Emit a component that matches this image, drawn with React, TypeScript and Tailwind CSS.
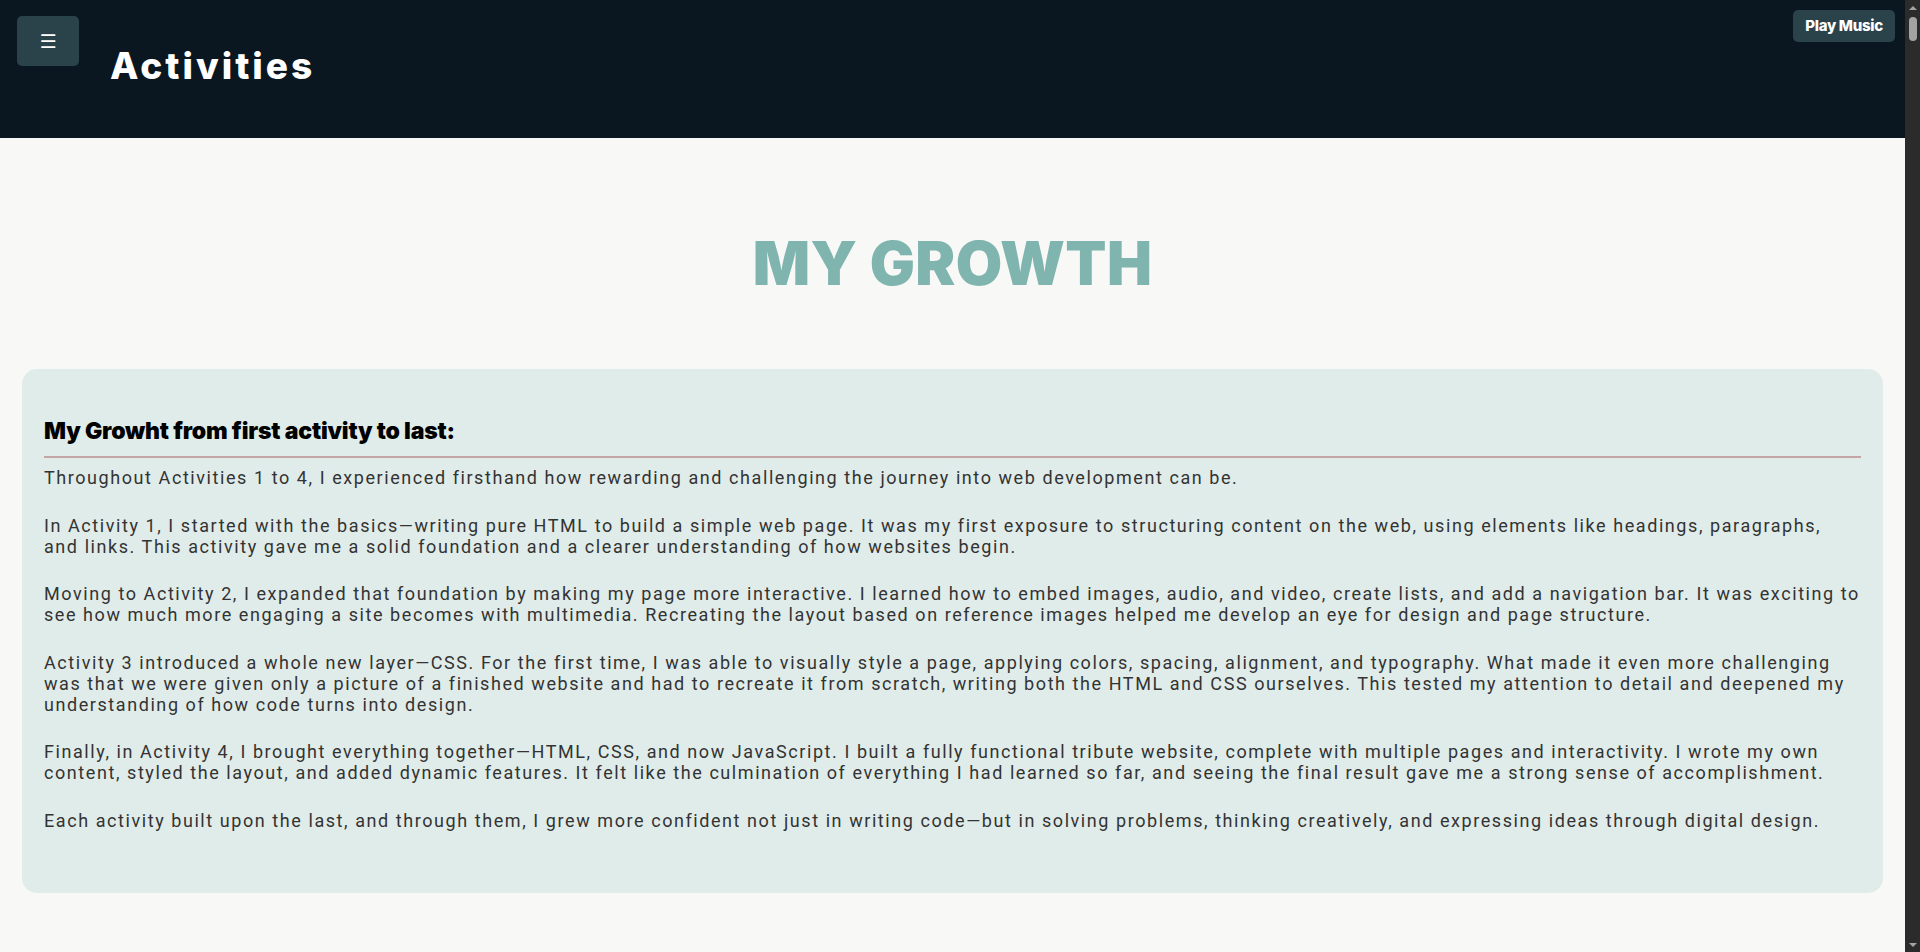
const paragraphs = [
  "Throughout Activities 1 to 4, I experienced firsthand how rewarding and challenging the journey into web development can be.",
  "In Activity 1, I started with the basics—writing pure HTML to build a simple web page. It was my first exposure to structuring content on the web, using elements like headings, paragraphs, and links. This activity gave me a solid foundation and a clearer understanding of how websites begin.",
  "Moving to Activity 2, I expanded that foundation by making my page more interactive. I learned how to embed images, audio, and video, create lists, and add a navigation bar. It was exciting to see how much more engaging a site becomes with multimedia. Recreating the layout based on reference images helped me develop an eye for design and page structure.",
  "Activity 3 introduced a whole new layer—CSS. For the first time, I was able to visually style a page, applying colors, spacing, alignment, and typography. What made it even more challenging was that we were given only a picture of a finished website and had to recreate it from scratch, writing both the HTML and CSS ourselves. This tested my attention to detail and deepened my understanding of how code turns into design.",
  "Finally, in Activity 4, I brought everything together—HTML, CSS, and now JavaScript. I built a fully functional tribute website, complete with multiple pages and interactivity. I wrote my own content, styled the layout, and added dynamic features. It felt like the culmination of everything I had learned so far, and seeing the final result gave me a strong sense of accomplishment.",
  "Each activity built upon the last, and through them, I grew more confident not just in writing code—but in solving problems, thinking creatively, and expressing ideas through digital design.",
];

// dark page scrollbar as seen in the screenshot
const Scrollbar = () => (
  <div className="flex flex-col items-center w-[15px] h-full bg-[#2b2b2b] shrink-0">
    <div className="h-[15px] flex items-center justify-center">
      <div className="w-0 h-0 border-x-[4px] border-x-transparent border-b-[4px] border-b-[#a3a3a3]" />
    </div>
    <div className="mt-[2px] w-[8px] h-[24px] rounded-full bg-[#a3a3a3]" />
    <div className="flex-1" />
    <div className="h-[15px] flex items-center justify-center">
      <div className="w-0 h-0 border-x-[4px] border-x-transparent border-t-[4px] border-t-[#a3a3a3]" />
    </div>
  </div>
);

const App = () => {
  return (
    <div className="flex h-screen overflow-hidden bg-[#f8f8f6]">
      <div className="relative flex-1 min-w-0 h-full overflow-hidden">
        {/* Header */}
        <header className="flex items-start h-[138px] bg-[#0a1620] pl-[17px] pt-4">
          <button className="w-[62px] h-[50px] rounded-[5px] bg-[#2a434b] text-white text-[19px] leading-none font-['DejaVu_Sans',sans-serif]">
            ☰
          </button>
          <h1 className="ml-[31px] mt-[28px] text-white text-[37px] leading-[1.2] font-extrabold tracking-[3px] font-['Inter',sans-serif]">
            Activities
          </h1>
        </header>

        {/* Play Music */}
        <button className="absolute top-[10px] right-[10px] w-[102px] h-8 rounded-[5px] bg-[#2a434b] text-white text-[15px] font-extrabold tracking-[-0.3px] font-['Inter',sans-serif]">
          Play Music
        </button>

        <main className="pt-[95px]">
          <h1 className="text-center text-[60px] leading-none font-black tracking-[0.4px] text-[#7fb5ae] font-['Inter',sans-serif]">
            MY GROWTH
          </h1>

          <section className="mx-[22px] mt-[76px] rounded-[15px] bg-[#e0ecea] px-[22px] pt-[50px] pb-[36px]">
            <h2 className="pb-[12px] border-b-2 border-[#c3a5a5] text-[23px] leading-[1.1] font-black tracking-[-0.2px] text-black font-['Inter',sans-serif]">
              My Growht from first activity to last:
            </h2>
            <div className="pt-[9px] font-['Roboto',sans-serif] text-[18px] leading-[21px] tracking-[1.57px] text-[#333]">
              {paragraphs.map((p, i) => (
                <p key={i} className="mb-[26.5px]">
                  {p}
                </p>
              ))}
            </div>
          </section>
        </main>
      </div>
      <Scrollbar />
    </div>
  );
};

export default App;
